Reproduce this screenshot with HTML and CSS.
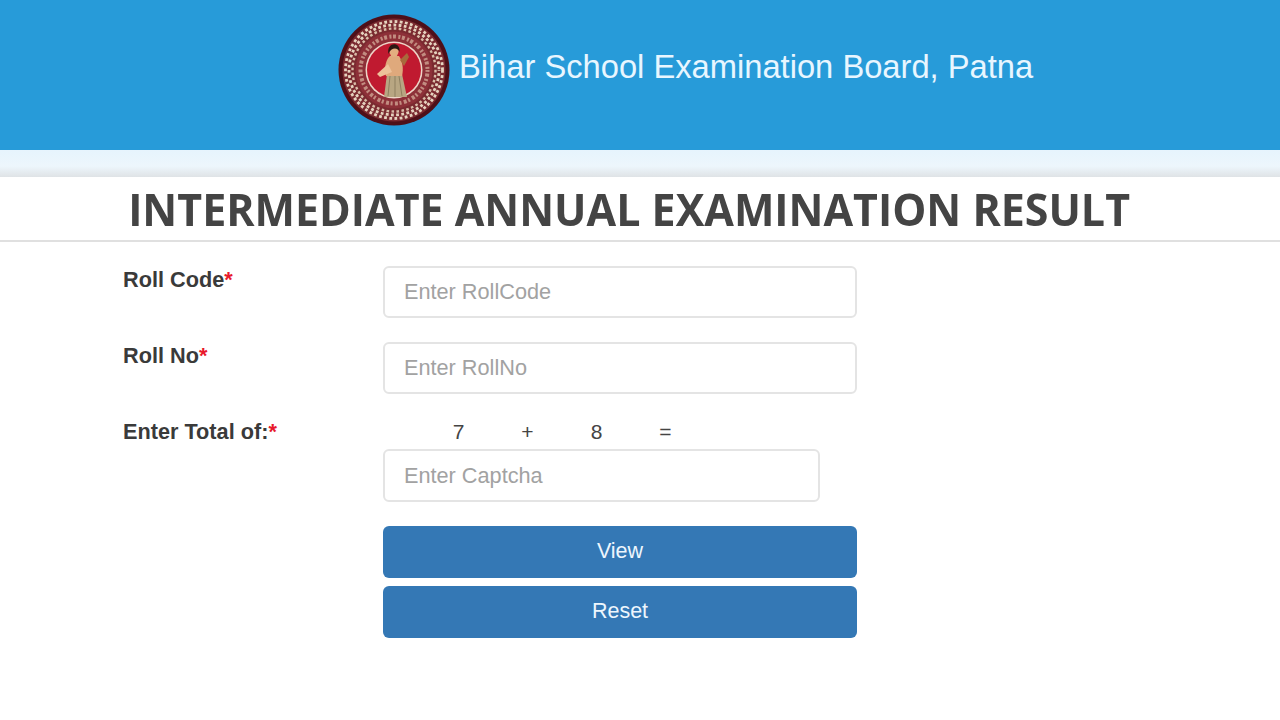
FILE: index.html
```html
<!DOCTYPE html>
<html lang="en">
  <head>
    <meta charset="UTF-8" />
    <meta name="viewport" content="width=device-width, initial-scale=1.0" />
    <title>Bihar School Examination Board, Patna</title>
    <link rel="stylesheet" href="styles.css">
  </head>
  <body>
    <!-- header -->
    <header class="header">
      <svg class="logo" viewBox="0 0 112 112" aria-hidden="true">
        <circle cx="56" cy="56" r="55.5" fill="#4e1019" />
        <circle cx="56" cy="56" r="51.5" fill="#7a2a30" />
        <circle cx="56" cy="56" r="48.5" fill="none" stroke="#e6d3bf" stroke-width="2.8" stroke-dasharray="2.8 2.4" />
        <circle cx="56" cy="56" r="45" fill="none" stroke="#e6d3bf" stroke-width="2.8" stroke-dasharray="2.8 2.4" stroke-dashoffset="2" />
        <circle cx="56" cy="56" r="41.5" fill="none" stroke="#d9bda8" stroke-width="2.4" stroke-dasharray="2.6 2.4" />
        <circle cx="56" cy="56" r="38.5" fill="#8d3038" />
        <circle cx="56" cy="56" r="33.5" fill="none" stroke="#d8b4a0" stroke-width="4" stroke-dasharray="2 1.6 3 2.4" opacity="0.7" />
        <circle cx="56" cy="56" r="28.5" fill="#eed5c8" />
        <circle cx="56" cy="56" r="27" fill="#c01a30" />
        <path d="M46 83 L49 60 L64 60 L69 83 Z" fill="#b8a682" />
        <path d="M52 62 L50 82 M57 62 L57 83 M61 62 L64 82" stroke="#8f8060" stroke-width="1" fill="none" />
        <path d="M48 62 C45 54 49 44 52 42 L61 42 C64 46 66 54 64 62 Z" fill="#dfa97c" />
        <path d="M50 50 L39 60 L42 63 L54 58 Z" fill="#edc29a" />
        <path d="M62 46 L69 39 L71 43 L66 52 Z" fill="#a86a3c" />
        <ellipse cx="56" cy="37" rx="4.6" ry="6" fill="#e3ae80" />
        <path d="M50.5 40 C48 28 63 27 61.5 38 C60 33 53 33 50.5 40 Z" fill="#2a1712" />
      </svg>
      <div class="boardName">Bihar School Examination Board, Patna</div>
    </header>
    <div class="strip"></div>

    <!-- title -->
    <h1 class="title"><span class="titleText">INTERMEDIATE ANNUAL EXAMINATION RESULT</span></h1>

    <!-- form -->
    <form class="form">
      <label class="label">Roll Code<span class="req">*</span></label>
      <input class="input" type="text" placeholder="Enter RollCode" />

      <label class="label">Roll No<span class="req">*</span></label>
      <input class="input" type="text" placeholder="Enter RollNo" />

      <label class="label">Enter Total of:<span class="req">*</span></label>
      <div>
        <div class="sum">
          <span>7</span>
          <span>+</span>
          <span>8</span>
          <span>=</span>
        </div>
        <input class="input captcha" type="text" placeholder="Enter Captcha" />
      </div>

      <div class="buttons">
        <button class="btn" type="button">View</button>
        <button class="btn" type="button">Reset</button>
      </div>
    </form>
  </body>
</html>
```

FILE: styles.css
```css
* {
  margin: 0;
  padding: 0;
  box-sizing: border-box;
}
html,
body {
  height: 100%;
  overflow: hidden;
}
body {
  background: #fff;
  font-family: "Liberation Sans", Arial, sans-serif;
  color: #333;
}

/* header */
.header {
  height: 150px;
  background: #279bd9;
  padding: 14px 0 0 338px;
  display: flex;
  align-items: flex-start;
  gap: 9px;
}
.logo {
  width: 112px;
  height: 112px;
  flex: none;
  filter: blur(0.7px);
}
.boardName {
  margin-top: 35px;
  font-size: 32.7px;
  line-height: 36px;
  color: #e8f6ff;
  white-space: nowrap;
}
.strip {
  height: 27px;
  background: linear-gradient(#e6f4fd 0, #edf6fc 60%, #dfe3e6 100%);
}

/* title */
.title {
  height: 65px;
  border-bottom: 2px solid #e0e0e0;
  padding-right: 22px;
  font-family: "Open Sans", sans-serif;
  font-size: 45px;
  line-height: 64px;
  font-weight: 700;
  color: #444;
  text-align: center;
  white-space: nowrap;
}
.titleText {
  display: inline-block;
  transform: scaleX(0.954);
}

/* form */
.form {
  padding: 24px 0 0 123px;
  display: grid;
  grid-template-columns: 260px 474px;
  row-gap: 24px;
  align-items: start;
}
.label {
  font-size: 21.7px;
  line-height: 28px;
  font-weight: 700;
  color: #3a3a3a;
}
.req {
  color: #e8192c;
}
.input {
  display: block;
  width: 100%;
  height: 52px;
  padding: 0 19px;
  border: 2px solid #e4e4e4;
  border-radius: 6px;
  background: #fff;
  font-family: inherit;
  font-size: 21.7px;
  color: #555;
}
.input::placeholder {
  color: #a2a2a2;
  opacity: 1;
}
.captcha {
  width: 437px;
  height: 53px;
}
.sum {
  height: 31px;
  padding-left: 41px;
  display: flex;
  font-size: 21px;
  line-height: 28px;
  color: #444;
}
.sum span {
  width: 69px;
  text-align: center;
}
.buttons {
  grid-column: 2;
  display: flex;
  flex-direction: column;
  gap: 8px;
}
.btn {
  height: 52px;
  padding-bottom: 2px;
  border: none;
  border-radius: 6px;
  background: #3478b5;
  color: #edf6fd;
  font-family: inherit;
  font-size: 21.5px;
}
```
